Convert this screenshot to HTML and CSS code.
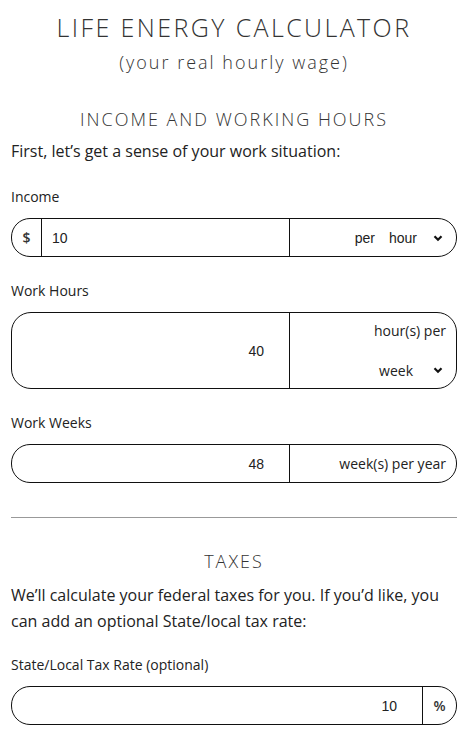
FILE: index.html
```html
<!DOCTYPE html>
<html lang="en">
<head>
<meta charset="utf-8">
<title>Life Energy Calculator</title>
<link rel="stylesheet" href="styles.css">
</head>
<body>
<main class="page">
  <header class="hero">
    <h1 class="title">LIFE ENERGY CALCULATOR</h1>
    <p class="subtitle">(your real hourly wage)</p>
  </header>

  <section class="section">
    <h2 class="section-title">INCOME AND WORKING HOURS</h2>
    <p class="intro">First, let’s get a sense of your work situation:</p>

    <div class="field field-first">
      <div class="label">Income</div>
      <div class="box box-income">
        <div class="cell prefix">$</div>
        <div class="cell value value-left">10</div>
        <div class="cell unit">
          <span class="select">
            <span class="sel-text">per</span>
            <span class="sel-text">hour</span>
            <svg class="chev" viewBox="0 0 10 10" width="10" height="10"><path d="M1.5 3.2 L5 6.7 L8.5 3.2" fill="none" stroke="#111" stroke-width="2.2"/></svg>
          </span>
        </div>
      </div>
    </div>

    <div class="field">
      <div class="label">Work Hours</div>
      <div class="box box-tall">
        <div class="cell value value-right">40</div>
        <div class="cell unit unit-stack">
          <span class="unit-text">hour(s) per</span>
          <span class="select">
            <span class="sel-text sel-open">week</span>
            <svg class="chev chev-wide" viewBox="0 0 10 10" width="10" height="10"><path d="M1.5 3.2 L5 6.7 L8.5 3.2" fill="none" stroke="#111" stroke-width="2.2"/></svg>
          </span>
        </div>
      </div>
    </div>

    <div class="field">
      <div class="label">Work Weeks</div>
      <div class="box box-two">
        <div class="cell value value-right">48</div>
        <div class="cell unit"><span class="unit-text">week(s) per year</span></div>
      </div>
    </div>
  </section>

  <hr class="rule">

  <section class="section">
    <h2 class="section-title taxes">TAXES</h2>
    <p class="intro intro-tax">We’ll calculate your federal taxes for you. If you’d like, you can add an optional State/local tax rate:</p>

    <div class="field field-tax">
      <div class="label">State/Local Tax Rate (optional)</div>
      <div class="box box-tax">
        <div class="cell value value-right">10</div>
        <div class="cell suffix">%</div>
      </div>
    </div>
  </section>
</main>
</body>
</html>
```
FILE: styles.css
```css
* { box-sizing: border-box; }
html, body { margin: 0; padding: 0; background: #fff; }
body {
  font-family: "Open Sans", "Liberation Sans", sans-serif;
  color: #222;
}
.page {
  width: 470px;
  padding: 0 13px 0 11px;
}
.hero { text-align: center; padding-top: 12px; }
.title {
  margin: 0;
  font-weight: 300;
  font-size: 25px;
  line-height: 30px;
  letter-spacing: 2.4px;
  color: #333;
}
.subtitle {
  margin: 8px 0 0;
  font-weight: 300;
  font-size: 18px;
  line-height: 24px;
  letter-spacing: 2px;
  color: #333;
}
.section-title {
  margin: 33px 0 0;
  text-align: center;
  font-weight: 300;
  font-size: 18px;
  line-height: 24px;
  letter-spacing: 2px;
  color: #333;
}
.intro {
  margin: 7px 0 0;
  font-size: 16px;
  line-height: 26px;
  color: #222;
}
.field { margin-top: 25px; }
.field-first { margin-top: 24px; }
.label {
  font-size: 14px;
  line-height: 18px;
  color: #222;
  margin-bottom: 12px;
}
.box {
  display: grid;
  border: 1px solid #111;
  border-radius: 19px;
  height: 39px;
  font-size: 14px;
}
.box-income { grid-template-columns: 29px 248px 1fr; }
.box-tall {
  grid-template-columns: 277px 1fr;
  height: 77px;
  border-radius: 20px;
}
.box-two { grid-template-columns: 277px 1fr; }
.box-tax { grid-template-columns: 1fr 34px; }
.cell {
  display: flex;
  align-items: center;
  border-left: 1px solid #111;
  font-family: "Liberation Sans", Arial, sans-serif;
  color: #222;
}
.cell:first-child { border-left: none; }
.prefix { justify-content: center; font-family: "Open Sans", sans-serif; font-size: 14px; font-weight: 600; color: #333; }
.value-left { padding-left: 10px; }
.value-right { justify-content: flex-end; padding-right: 25px; }
.suffix { justify-content: center; font-family: "Open Sans", sans-serif; font-size: 14px; font-weight: 600; color: #333; }
.unit { justify-content: flex-end; padding-right: 13px; }
.select { display: flex; align-items: center; justify-content: flex-end; gap: 14px; }
.sel-text { font-family: "Liberation Sans", Arial, sans-serif; }
.sel-open { font-family: "Open Sans", sans-serif; }
.chev { margin-left: 2px; }
.chev-wide { margin-left: 6px; }
.unit-text { font-family: "Open Sans", sans-serif; }
.unit-stack {
  flex-direction: column;
  align-items: flex-end;
  justify-content: center;
  gap: 21px;
  padding-right: 10px;
}
.unit-stack .select { margin-right: 3px; }
.box-two .unit { padding-right: 10px; }
.unit-stack .unit-text, .box-two .unit-text { line-height: 18px; }
.rule {
  margin: 34px 0 0;
  border: none;
  border-top: 1px solid #999;
  height: 0;
}
.taxes { margin-top: 31px; }
.intro-tax { margin-top: 9px; }
.field-tax { margin-top: 22px; }
```
